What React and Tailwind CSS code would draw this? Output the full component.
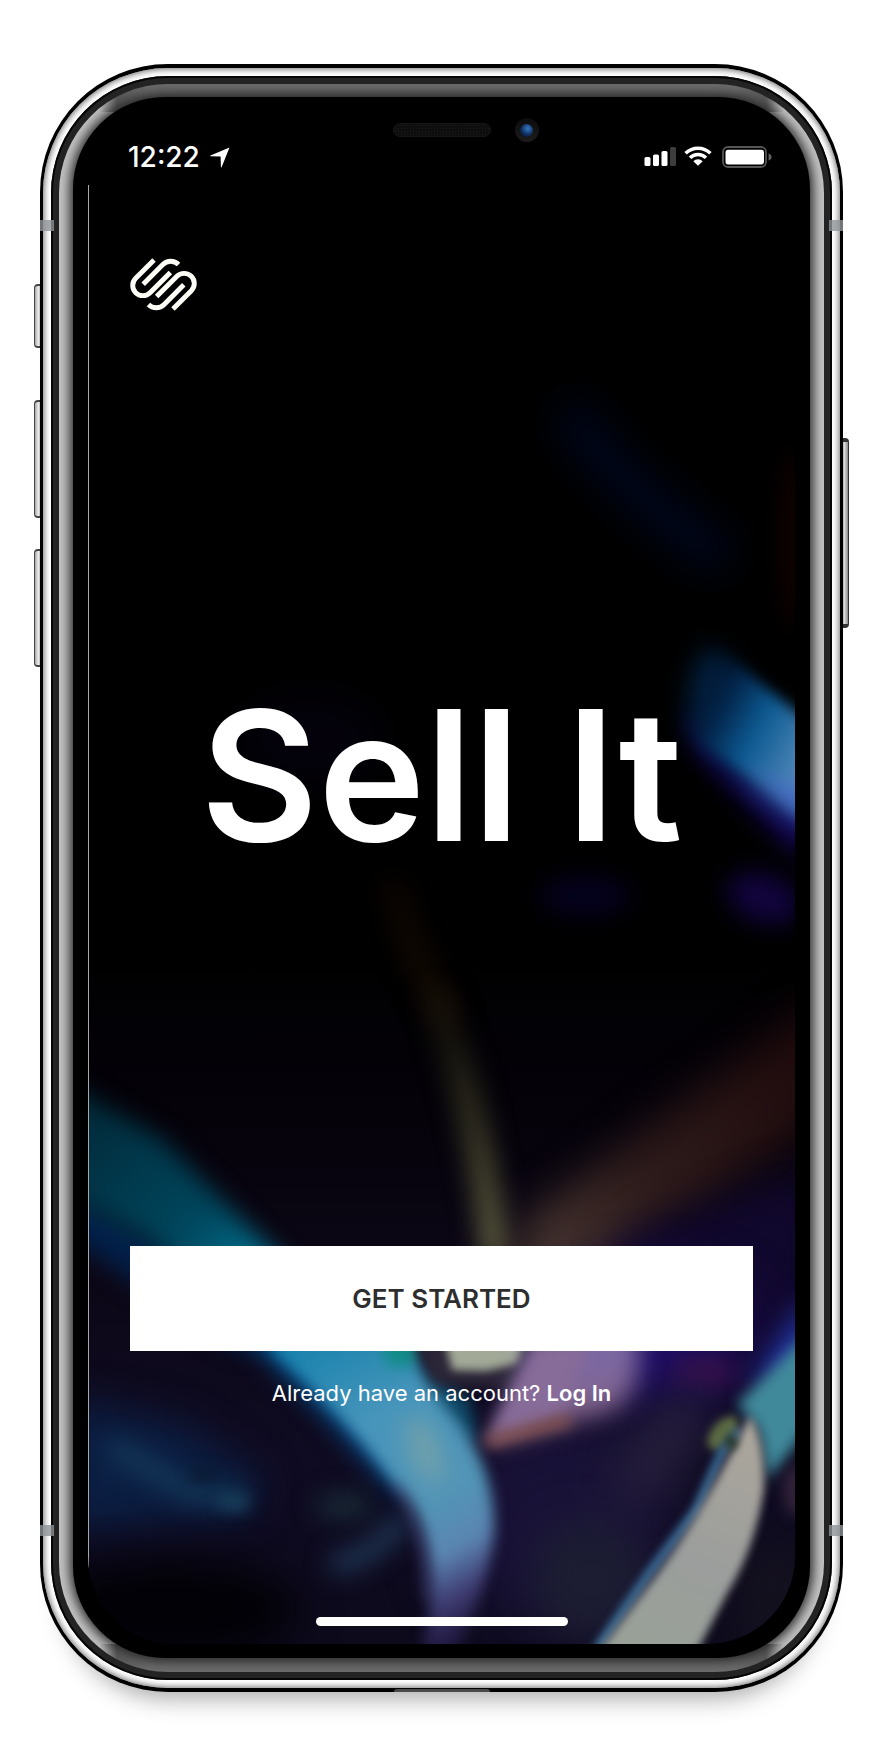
function Logo() {
  return (
    <svg viewBox="45 53 204 162" className="h-[53px] w-[67px]" fill="none" stroke="#fdfdf8" strokeWidth="15" role="img" aria-label="Squarespace">
      <path d="M118 59 L62 115 A31 31 0 0 0 106 159 L168 97" />
      <path d="M85 133 L145 73 A34 34 0 0 1 193 73" />
      <path d="M176 209 L232 153 A31 31 0 0 0 188 109 L126 171" />
      <path d="M209 135 L149 195 A34 34 0 0 1 101 195" />
    </svg>
  );
}

function LocationArrow() {
  return (
    <svg viewBox="0 0 20 21" className="h-[21px] w-5" fill="white" aria-hidden="true">
      <path d="M19.5 0.5 L11.6 20.3 Q11 20.6 10.9 19.8 L10.6 9.6 L0.5 9.2 Q-0.2 8.9 0.5 8.5 Z" />
    </svg>
  );
}

function StatusIcons() {
  return (
    <svg viewBox="0 0 129 24" className="h-6 w-[129px]" aria-hidden="true">
      <g fill="white">
        <rect x="0.5" y="12" width="6" height="9" rx="1.6" />
        <rect x="9" y="9.5" width="6" height="11.5" rx="1.6" />
        <rect x="17.5" y="6" width="6" height="15" rx="1.6" />
        <rect x="26" y="2" width="6" height="19" rx="1.6" fill="#3d3d3d" />
        <path d="M54 20.8 L49.3 16.2 A6.7 6.7 0 0 1 58.7 16.2 Z" />
      </g>
      <g fill="none" stroke="white" strokeWidth="3.6">
        <path d="M46 12.8 A11.4 11.4 0 0 1 62 12.8" />
        <path d="M41.6 8.3 A17.6 17.6 0 0 1 66.4 8.3" />
      </g>
      <rect x="79" y="2" width="43" height="20" rx="5" fill="none" stroke="#555" strokeWidth="1.8" />
      <rect x="81.5" y="4.8" width="38.5" height="14.6" rx="2.6" fill="white" />
      <path d="M124.6 8.2 Q127.6 9.6 127.6 12 Q127.6 14.4 124.6 15.8 Z" fill="#666" />
    </svg>
  );
}

function Wallpaper() {
  return (
    <svg
      viewBox="88 97 707 1547"
      preserveAspectRatio="xMidYMid slice"
      className="absolute inset-0 h-full w-full"
      aria-hidden="true"
    >
      <defs>
        {[2, 4, 7, 12, 20, 32].map((n) => (
          <filter
            key={n}
            id={"b" + n}
            filterUnits="userSpaceOnUse"
            x="-100"
            y="0"
            width="1100"
            height="1800"
            colorInterpolationFilters="sRGB"
          >
            <feGaussianBlur stdDeviation={n} />
          </filter>
        ))}
        <linearGradient id="base" x1="0" y1="97" x2="0" y2="1644" gradientUnits="userSpaceOnUse">
          <stop offset="0" stopColor="#000" />
          <stop offset="0.55" stopColor="#000" />
          <stop offset="0.66" stopColor="#05020a" />
          <stop offset="0.76" stopColor="#0c0716" />
          <stop offset="0.88" stopColor="#0f0b22" />
          <stop offset="1" stopColor="#0d0a1c" />
        </linearGradient>
        <linearGradient id="petal" x1="690" y1="710" x2="800" y2="770" gradientUnits="userSpaceOnUse">
          <stop offset="0" stopColor="#02122e" stopOpacity="0.2" />
          <stop offset="0.25" stopColor="#032a52" />
          <stop offset="0.55" stopColor="#0d5a92" />
          <stop offset="1" stopColor="#5088b8" />
        </linearGradient>
        <linearGradient id="cyan" x1="88" y1="1120" x2="300" y2="1330" gradientUnits="userSpaceOnUse">
          <stop offset="0" stopColor="#012c3c" />
          <stop offset="0.5" stopColor="#00475e" />
          <stop offset="0.75" stopColor="#027391" />
          <stop offset="1" stopColor="#0b86a8" />
        </linearGradient>
        <linearGradient id="ribbon" x1="300" y1="1340" x2="470" y2="1644" gradientUnits="userSpaceOnUse">
          <stop offset="0" stopColor="#1782ac" />
          <stop offset="0.3" stopColor="#4795bb" />
          <stop offset="0.6" stopColor="#5294b6" />
          <stop offset="0.74" stopColor="#5b85b2" />
          <stop offset="0.86" stopColor="#3f3c72" />
          <stop offset="0.96" stopColor="#221a42" />
        </linearGradient>
        <linearGradient id="ember" x1="0" y1="850" x2="0" y2="1020" gradientUnits="userSpaceOnUse">
          <stop offset="0" stopColor="#080301" />
          <stop offset="1" stopColor="#160c03" />
        </linearGradient>
        <linearGradient id="olive" x1="0" y1="980" x2="0" y2="1250" gradientUnits="userSpaceOnUse">
          <stop offset="0" stopColor="#17120a" stopOpacity="0.4" />
          <stop offset="0.4" stopColor="#262519" />
          <stop offset="1" stopColor="#5c5c40" />
        </linearGradient>
        <linearGradient id="rust" x1="795" y1="1060" x2="540" y2="1250" gradientUnits="userSpaceOnUse">
          <stop offset="0" stopColor="#200b0d" />
          <stop offset="0.6" stopColor="#2e1b1b" />
          <stop offset="1" stopColor="#463530" />
        </linearGradient>
        <linearGradient id="sail" x1="570" y1="1350" x2="590" y2="1440" gradientUnits="userSpaceOnUse">
          <stop offset="0" stopColor="#7b69a8" />
          <stop offset="0.6" stopColor="#806690" />
          <stop offset="1" stopColor="#7c4c50" />
        </linearGradient>
        <linearGradient id="ivory" x1="740" y1="1420" x2="640" y2="1644" gradientUnits="userSpaceOnUse">
          <stop offset="0" stopColor="#aca69c" />
          <stop offset="0.6" stopColor="#9b9e9c" />
          <stop offset="1" stopColor="#99a098" />
        </linearGradient>
      </defs>

      <rect x="0" y="0" width="900" height="1757" fill="url(#base)" />

      <path d="M568 410 Q620 490 725 560" fill="none" stroke="#000822" strokeWidth="34" filter="url(#b20)" />
      <ellipse cx="795" cy="540" rx="12" ry="90" fill="#120300" filter="url(#b12)" />
      <ellipse cx="310" cy="740" rx="70" ry="40" fill="#04010c" filter="url(#b20)" />

      <path d="M685 710 L700 755 L800 858 L830 780 Z" fill="#150858" filter="url(#b12)" />
      <path d="M708 646 L730 660 L830 800 L790 815 L692 735 Q680 680 708 646 Z" fill="#03203f" filter="url(#b12)" />
      <path d="M718 650 L812 724 L812 822 L704 745 Q694 690 718 650 Z" fill="url(#petal)" filter="url(#b7)" />
      <path d="M740 772 L815 796 L815 830 Z" fill="#3f5fc4" filter="url(#b12)" />
      <ellipse cx="764" cy="898" rx="38" ry="24" fill="#11043e" filter="url(#b12)" transform="rotate(20 764 898)" />
      <ellipse cx="585" cy="896" rx="46" ry="20" fill="#05011e" filter="url(#b12)" />

      <path d="M392 880 Q412 960 450 1020" fill="none" stroke="url(#ember)" strokeWidth="26" filter="url(#b12)" />
      <path d="M432 990 Q478 1100 496 1260" fill="none" stroke="url(#olive)" strokeWidth="28" filter="url(#b12)" />

      <path d="M840 985 L530 1215 L500 1290 L600 1270 L840 1110 Z" fill="url(#rust)" filter="url(#b20)" />
      <path d="M620 1240 L820 1170 L820 1350 L600 1350 Z" fill="#11082e" filter="url(#b20)" />

      <path d="M40 1170 L300 1330 L240 1350 L40 1220 Z" fill="#03204a" filter="url(#b12)" />
      <path d="M40 1070 L160 1138 L255 1234 L330 1310 L240 1330 L150 1240 L40 1186 Z" fill="url(#cyan)" filter="url(#b12)" />

      <ellipse cx="640" cy="1345" rx="110" ry="60" fill="#1f0f68" filter="url(#b32)" />
      <ellipse cx="560" cy="1520" rx="110" ry="110" fill="#191238" filter="url(#b32)" />
      <ellipse cx="590" cy="1580" rx="60" ry="60" fill="#1c1d32" filter="url(#b20)" />
      <ellipse cx="705" cy="1372" rx="34" ry="14" fill="#38104a" filter="url(#b12)" />
      <ellipse cx="660" cy="1450" rx="30" ry="70" fill="#241d3a" filter="url(#b20)" transform="rotate(35 660 1450)" />
      <ellipse cx="775" cy="1600" rx="40" ry="60" fill="#14111f" filter="url(#b20)" />

      <path d="M60 1400 L180 1425 L260 1480 L250 1512 L60 1530 Z" fill="#0b1f44" filter="url(#b20)" />
      <path d="M110 1445 L190 1492 L245 1498" fill="none" stroke="#143858" strokeWidth="20" filter="url(#b12)" />
      <ellipse cx="234" cy="1502" rx="16" ry="8" fill="#183e5a" filter="url(#b7)" />
      <ellipse cx="204" cy="1474" rx="16" ry="7" fill="#0a1930" filter="url(#b7)" />
      <ellipse cx="345" cy="1506" rx="30" ry="13" fill="#182a36" filter="url(#b12)" />
      <path d="M330 1565 Q375 1560 405 1515" fill="none" stroke="#1f3654" strokeWidth="20" filter="url(#b12)" />
      <ellipse cx="170" cy="1610" rx="130" ry="50" fill="#020106" filter="url(#b20)" />

      <path d="M240 1330 L330 1330 L420 1460 L400 1496 L330 1420 Z" fill="#06508c" filter="url(#b12)" />
      <path d="M395 1340 L470 1400 L478 1445 L440 1430 Z" fill="#0e4664" filter="url(#b7)" />
      <path
        d="M272 1330 L405 1335 Q425 1385 458 1422 Q496 1470 494 1535 Q488 1590 446 1675 L415 1675 Q440 1600 426 1545 Q420 1510 395 1484 Q350 1420 272 1350 Z"
        fill="url(#ribbon)"
        filter="url(#b7)"
      />
      <path d="M395 1484 Q425 1520 428 1600" fill="none" stroke="#4a4a86" strokeWidth="8" strokeOpacity="0.6" filter="url(#b7)" />
      <ellipse cx="425" cy="1450" rx="14" ry="36" fill="#74a1aa" filter="url(#b12)" transform="rotate(-20 425 1450)" />
      <ellipse cx="400" cy="1350" rx="18" ry="18" fill="#128c88" filter="url(#b7)" />
      <path d="M414 1340 L545 1340 L520 1390 L432 1385 Z" fill="#2c2638" filter="url(#b7)" />
      <path d="M442 1330 L528 1330 L518 1364 L486 1371 L452 1370 Z" fill="#a2a997" filter="url(#b4)" />

      <path d="M545 1325 L635 1325 Q650 1390 610 1412 L486 1446 Z" fill="url(#sail)" filter="url(#b12)" />
      <path d="M534 1345 L590 1345 L565 1408 L486 1444 Z" fill="#876b98" filter="url(#b7)" />
      <path d="M486 1442 L570 1420" stroke="#8a5348" strokeWidth="10" filter="url(#b7)" />

      <path d="M810 1290 L745 1390 L810 1370 Z" fill="#21309a" filter="url(#b12)" />
      <path d="M815 1326 L737 1404 L758 1430 L768 1480 L815 1420 Z" fill="#40899b" filter="url(#b7)" />
      <ellipse cx="795" cy="1490" rx="12" ry="26" fill="#32233a" filter="url(#b7)" />
      <ellipse cx="723" cy="1433" rx="11" ry="20" fill="#5d6c44" filter="url(#b4)" transform="rotate(40 723 1433)" />
      <path d="M740 1430 L722 1452 L696 1510 L650 1572 L596 1650" fill="none" stroke="#3f78a6" strokeWidth="8" filter="url(#b4)" />
      <path
        d="M750 1416 Q765 1440 764 1490 Q754 1550 728 1592 L690 1665 L588 1665 L655 1577 Q690 1530 726 1462 Z"
        fill="url(#ivory)"
        filter="url(#b4)"
      />
      <ellipse cx="731" cy="1442" rx="6" ry="8" fill="#26331f" filter="url(#b4)" />
    </svg>
  );
}

function PhoneFrame({ children }) {
  return (
    <div className="relative">
      {/* side buttons */}
      <div className="absolute -left-1.5 top-[220px] h-[64px] w-2 rounded-l-[4px] border-y-2 border-l border-[#444] bg-linear-to-r from-[#aaa] via-[#eee] to-[#777]" />
      <div className="absolute -left-1.5 top-[336px] h-[118px] w-2 rounded-l-[4px] border-y-2 border-l border-[#444] bg-linear-to-r from-[#aaa] via-[#eee] to-[#777]" />
      <div className="absolute -left-1.5 top-[485px] h-[118px] w-2 rounded-l-[4px] border-y-2 border-l border-[#444] bg-linear-to-r from-[#aaa] via-[#eee] to-[#777]" />
      <div className="absolute -right-1.5 top-[374px] h-[190px] w-2 rounded-r-[4px] border-y-4 border-r border-[#333] bg-linear-to-r from-[#777] via-[#ddd] to-[#888]" />

      <div className="relative rounded-[128px] bg-black px-[3px] py-1 shadow-[0_30px_24px_-24px_rgba(0,0,0,0.35)]">
        <div className="rounded-[125px] bg-white p-2 shadow-[inset_0_0_6px_1px_#6a6a6a]">
          <div className="rounded-[117px] bg-[#242424] p-2 shadow-[inset_0_0_0_2px_#050505]">
            <div className="rounded-[109px] bg-[#c4c4c4] bg-[linear-gradient(90deg,transparent_40px,#5a5a5a_58px,#6c6c6c_90px,#6c6c6c_calc(100%-90px),#5a5a5a_calc(100%-58px),transparent_calc(100%-40px)),linear-gradient(90deg,transparent_40px,#5a5a5a_58px,#6c6c6c_90px,#6c6c6c_calc(100%-90px),#5a5a5a_calc(100%-58px),transparent_calc(100%-40px))] bg-[length:100%_28px] bg-[position:top,bottom] bg-no-repeat px-3.5 pt-[13px] pb-3.5">
              <div className="rounded-[92px] bg-black px-[15px] pb-3.5 shadow-[0_0_12px_3px_#222]">{children}</div>
            </div>
          </div>
        </div>
      </div>

      {/* antenna bands */}
      <div className="absolute top-[156px] left-0 h-[11px] w-3.5 bg-[#909396]/80" />
      <div className="absolute top-[156px] right-0 h-[11px] w-3.5 bg-[#909396]/80" />
      <div className="absolute bottom-[156px] left-0 h-[11px] w-3.5 bg-[#909396]/80" />
      <div className="absolute right-0 bottom-[156px] h-[11px] w-3.5 bg-[#909396]/80" />
      <div className="absolute bottom-0 left-1/2 h-[3px] w-24 -translate-x-1/2 rounded-t-full bg-[#4a4a4a]" />
    </div>
  );
}

export default function App() {
  return (
    <main className="bg-white pt-16 pr-[41px] pb-16 pl-10 font-['Inter',sans-serif] text-white">
      <PhoneFrame>
        <div className="relative isolate flex flex-col overflow-hidden rounded-[88px]">
          <div className="absolute inset-0 -z-10">
            <Wallpaper />
          </div>
          <div className="absolute top-[88px] bottom-[70px] left-0 w-px bg-[#a8a8a8]" />

          <div className="grid grid-cols-[1fr_98px_1fr] items-center gap-6 pt-[21px]">
            <span />
            <div className="h-3.5 rounded-full border border-[#161616] bg-[#0e0e0e] bg-[radial-gradient(#1c1c1c_35%,transparent_40%)] bg-[length:3px_3px]" />
            <div className="flex size-6 items-center justify-center rounded-full bg-linear-to-b from-[#0c0c0c] to-[#1c1c1c]">
              <div className="size-[13px] rounded-full bg-[radial-gradient(circle_at_60%_35%,#2f6db0_10%,#153a70_45%,#0a1a3a_75%)]" />
            </div>
          </div>

          <header className="flex h-[30px] items-center justify-between pr-[22px] pl-10">
            <div className="flex items-center gap-2.5">
              <time className="text-[28px] leading-[30px] font-medium">12:22</time>
              <LocationArrow />
            </div>
            <StatusIcons />
          </header>

          <div className="flex flex-col px-[42px]">
            <div className="mt-[86px]">
              <Logo />
            </div>
            <h1 className="mt-[374px] text-center text-[181px] leading-none font-semibold whitespace-nowrap">Sell It</h1>
            <button
              type="button"
              className="mt-[380px] h-[105px] w-full bg-white text-[26px] font-semibold text-[#2e2e2e]"
            >
              GET STARTED
            </button>
            <p className="mt-[26px] text-center text-[22px] leading-8">
              Already have an account?{" "}
              <a href="#login" className="font-semibold">
                Log In
              </a>
            </p>
          </div>

          <div className="mx-auto mt-[208px] mb-[18px] h-[9px] w-[252px] rounded-full bg-white" />
        </div>
      </PhoneFrame>
    </main>
  );
}
